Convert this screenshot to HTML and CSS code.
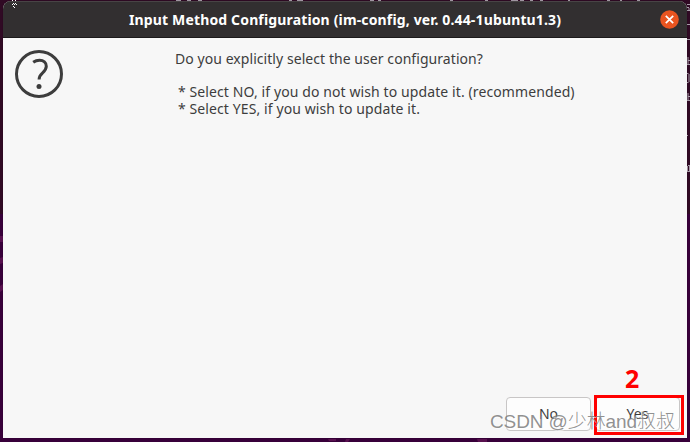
FILE: index.html
```html
<!DOCTYPE html>
<html lang="en">
<head>
<meta charset="utf-8">
<title>Input Method Configuration</title>
<link rel="stylesheet" href="styles.css">
</head>
<body>
<div class="desktop">
  <svg class="backdrop" width="690" height="442" aria-hidden="true">
    <path class="terminal" d="M0 0H690V214H0Z"/>
    <path class="glow" d="M0 236h3v6H0zM0 258l3-1v6l-3 1zM0 286l3-2v6l-3 2zM328 439h8v2h-7zM346 439h4l-2 3h-3zM477 439h10v3h-9z"/>
    <path class="output" d="M176 .5h5M187 .5h4M198 .5h4M289 .5h3M297 .5h6M370 .5h4M378 .5h3M450 .5h3M485 .5h3M511 .5h7M520 .5h4M530 .5h3M540 .5h3M568 .5h2M607 .5h3M620 .5h2M637 .5h3"/>
    <path class="output" d="M687 4.500h3M687 7.500h2M689 8v2M687 10.500h3M687 24.500h3M687 39.500h3M688 57v7M688 60.500h2M687 64.500h3M687 73.500h1.500M689 74v8M687 82.500h1.500M688 93v7M688 96.500h2M687 100.500h3M687 135.500h1M688 165.500h2M687.500 166v5M689.500 166v6M687 171.500h3"/>
  </svg>
  <main class="dialog">
    <header class="titlebar">
      <h1>Input Method Configuration (im-config, ver. 0.44-1ubuntu1.3)</h1>
      <button class="close" aria-label="Close"><svg width="19" height="19" viewBox="0 0 19 19"><circle cx="9.500" cy="9.500" r="9.300"/><path d="M5.800 5.800l7.400 7.400M13.200 5.800l-7.400 7.400"/></svg></button>
    </header>
    <section class="content">
      <svg class="question" width="48" height="48" viewBox="0 0 48 48"><circle class="ring" cx="24" cy="24" r="22.500"/><path class="hook" d="M18.200 12.300C20.200 10.900 22 10.300 24.500 10.300C28.600 10.300 31.300 12.600 31.300 16.300C31.300 19.200 29.600 21.200 27.400 23.100C25.200 25 24.100 26.500 24.100 29.500"/><circle class="dot" cx="24" cy="36.500" r="2.500"/></svg>
      <div class="message">
        <p class="ask">Do you explicitly select the user configuration?</p>
        <p class="no-line">* Select NO, if you do not wish to update it. (recommended)</p>
        <p class="yes-line">* Select YES, if you wish to update it.</p>
      </div>
    </section>
    <footer class="actions"><button>No</button><button>Yes</button></footer>
  </main>
  <svg class="pointer" width="6" height="8" aria-hidden="true"><path d="M0 0h1v1H0zM3 0h1v1H3zM1 3h1v1H1zM3 3h1v1H3zM0 4h1v1H0zM2 4h1v1H2zM4 4h1v1H4zM1 6h1v1H1zM2 7h1v1H2z"/></svg>
  <div class="step">2</div>
  <div class="highlight"></div>
  <div class="watermark">CSDN @少林and叔叔</div>
</div>
</body>
</html>
```
FILE: styles.css
```css
* { box-sizing: border-box; }
body { margin: 0; font-family: "Noto Sans", "Noto Sans CJK SC", sans-serif; }
h1, p { margin: 0; font-weight: normal; white-space: nowrap; }
button { border: 0; padding: 0; font: inherit; color: inherit; }
.desktop { position: relative; width: 690px; height: 442px; overflow: hidden; padding: 1px 3px 4px; background: #38003a; }
.backdrop { position: absolute; inset: 0; }
.terminal { fill: #300a24; }
.glow { fill: #58104f; }
.output { fill: none; stroke: #a99daa; stroke-width: 1; }
.dialog { position: relative; display: flex; flex-direction: column; height: 437px; border-radius: 8px 8px 0 0; overflow: hidden; background: #f7f7f7; box-shadow: 0 0 1px rgba(0, 0, 0, .5); }
.titlebar { display: grid; grid-template-columns: 1fr 19px; align-items: center; height: 37px; padding-right: 8.500px; background: #322f30; border-top: 1px solid #484445; border-bottom: 1px solid #1c1a1b; }
.titlebar h1 { padding-left: 126px; font-size: 14px; line-height: 20px; font-weight: 700; letter-spacing: .147px; color: #fff; }
.close { width: 19px; height: 19px; background: none; }
.close svg { display: block; }
.close circle { fill: #e95420; }
.close path { fill: none; stroke: #fff; stroke-width: 1.700; }
.content { display: flex; flex: 1; padding: 12px; }
.question { flex: none; }
.ring { fill: none; stroke: #3d3d3d; stroke-width: 3; }
.hook { fill: none; stroke: #3d3d3d; stroke-width: 3; }
.dot { fill: #3d3d3d; }
.message { margin-left: 112px; color: #3d3d3d; font-size: 14px; line-height: 17px; }
.ask { margin-bottom: 16px; letter-spacing: .06px; }
.no-line, .yes-line { padding-left: 3px; letter-spacing: .1px; }
.actions { display: flex; gap: 4px; justify-content: flex-end; padding: 0 7px 7px 0; }
.actions button { width: 85px; height: 34px; border: 1px solid #c8c6c6; border-radius: 4px; background: #fdfdfd; color: #3d3d3d; font-size: 14px; padding-bottom: 2px; }
.pointer { position: absolute; left: 12px; top: 0; fill: #fff; }
.step { position: absolute; left: 625px; top: 361px; font-family: "Noto Sans", sans-serif; font-size: 25px; line-height: 34px; font-weight: 700; color: #f00; }
.highlight { position: absolute; left: 594px; top: 395px; width: 90px; height: 40px; border: 3px solid #f00; }
.watermark { position: absolute; left: 490px; top: 408px; font-family: "Liberation Sans", "Noto Sans CJK SC", sans-serif; font-weight: 300; font-size: 19px; line-height: 28px; letter-spacing: -.1px; white-space: nowrap; color: rgba(125, 125, 125, .85); text-shadow: 1px 1px 0 rgba(255, 255, 255, .6); }
```
